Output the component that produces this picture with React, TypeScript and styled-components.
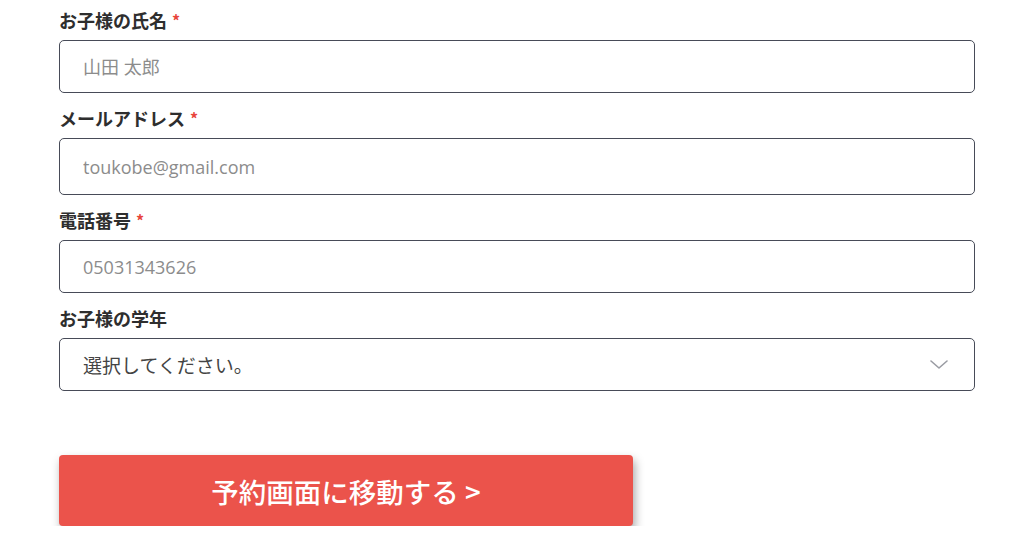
import styled, { createGlobalStyle } from 'styled-components';

const GlobalStyle = createGlobalStyle`
  html, body {
    margin: 0;
    padding: 0;
    background: #ffffff;
  }
  body {
    font-family: 'Open Sans', 'Noto Sans CJK JP', sans-serif;
    color: #333333;
  }
`;

const Page = styled.div`
  width: 100%;
  padding: 9px 0 0 59px;
  box-sizing: border-box;
`;

const Form = styled.form`
  width: 916px;
  display: flex;
  flex-direction: column;
  gap: 14px;
`;

const Field = styled.div`
  display: flex;
  flex-direction: column;
  gap: 9px;
`;

const Label = styled.label`
  font-family: 'Noto Sans CJK JP', sans-serif;
  font-weight: 700;
  font-size: 18px;
  line-height: 22px;
  color: #2e2e2e;
  display: flex;
  align-items: center;
  gap: 5px;
`;

const Required = styled.span`
  color: #e8453c;
  font-size: 16px;
`;

const Input = styled.input<{ $tall?: boolean }>`
  box-sizing: border-box;
  width: 100%;
  height: ${({ $tall }) => ($tall ? '57px' : '53px')};
  border: 1.5px solid #474b58;
  border-radius: 5px;
  padding: 0 23px;
  font-family: 'Open Sans', 'Noto Sans CJK JP', sans-serif;
  font-size: 18px;
  color: #333333;
  outline: none;
  &::placeholder {
    color: #8c8c8c;
  }
`;

const SelectBox = styled.div`
  box-sizing: border-box;
  width: 100%;
  height: 53px;
  border: 1.5px solid #474b58;
  border-radius: 5px;
  padding: 0 26px 0 23px;
  display: flex;
  align-items: center;
  justify-content: space-between;
  font-family: 'Noto Sans CJK JP', sans-serif;
  font-size: 19px;
  color: #444444;
`;

const ButtonRow = styled.div`
  margin-top: 50px;
`;

const SubmitButton = styled.button`
  width: 574px;
  height: 71px;
  border: none;
  border-radius: 4px;
  background: #eb534b;
  color: #ffffff;
  font-family: 'Noto Sans CJK JP', sans-serif;
  font-weight: 500;
  font-size: 27.5px;
  box-shadow: 2px 5px 10px rgba(0, 0, 0, 0.35);
  cursor: pointer;
`;

function Chevron() {
  return (
    <svg width="18" height="10" viewBox="0 0 18 10" fill="none">
      <path d="M1 1l8 7 8-7" stroke="#9a9ca3" strokeWidth="1.6" strokeLinecap="round" strokeLinejoin="round" />
    </svg>
  );
}

export default function App() {
  return (
    <>
      <GlobalStyle />
      <Page>
        <Form onSubmit={(e) => e.preventDefault()}>
          <Field>
            <Label>
              お子様の氏名<Required>*</Required>
            </Label>
            <Input placeholder="山田 太郎" />
          </Field>
          <Field>
            <Label>
              メールアドレス<Required>*</Required>
            </Label>
            <Input $tall placeholder="toukobe@gmail.com" />
          </Field>
          <Field>
            <Label>
              電話番号<Required>*</Required>
            </Label>
            <Input placeholder="05031343626" />
          </Field>
          <Field>
            <Label>お子様の学年</Label>
            <SelectBox>
              <span>選択してください。</span>
              <Chevron />
            </SelectBox>
          </Field>
          <ButtonRow>
            <SubmitButton type="submit">予約画面に移動する &gt;</SubmitButton>
          </ButtonRow>
        </Form>
      </Page>
    </>
  );
}
